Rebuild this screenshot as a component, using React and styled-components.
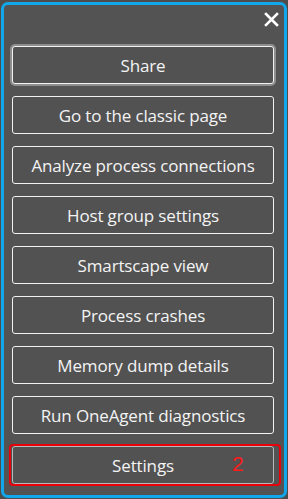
import styled, { createGlobalStyle } from "styled-components";

const Global = createGlobalStyle`
  html, body {
    margin: 0;
    padding: 0;
    background: #4d4d4d;
  }
`;

const Page = styled.div`
  width: 288px;
  height: 499px;
  box-sizing: border-box;
  padding: 2px 1px 1px 1px;
  font-family: "Open Sans", "Noto Sans", sans-serif;
`;

const Panel = styled.div`
  height: 100%;
  box-sizing: border-box;
  border: 3px solid #12a6ea;
  border-radius: 7px;
  background-color: #535353;
  display: flex;
  flex-direction: column;
  padding: 4px 10px 0 8px;
`;

const Header = styled.div`
  display: flex;
  justify-content: flex-end;
  height: 37px;
`;

const Close = styled.button`
  background: none;
  border: none;
  padding: 0;
  margin-right: -7px;
  width: 20px;
  height: 20px;
  display: flex;
  align-items: center;
  justify-content: center;
  cursor: pointer;
`;

const List = styled.div`
  display: flex;
  flex-direction: column;
  gap: 12px;
`;

const Item = styled.div`
  position: relative;
`;

const Button = styled.button`
  width: 100%;
  height: 38px;
  box-sizing: border-box;
  background: #525252;
  border: 1px solid ${(p) => (p.$muted ? "#b8b8b8" : "#f2f2f2")};
  border-radius: 3px;
  color: #f4f4f4;
  font-family: inherit;
  font-size: 17px;
  letter-spacing: -0.15px;
  padding: 0;
  cursor: pointer;
  box-shadow: ${(p) => (p.$focused ? "0 0 0 2px #8e8e8e" : "none")};
`;

const Highlight = styled.div`
  position: absolute;
  left: -3px;
  right: -7px;
  top: -2px;
  bottom: -2px;
  border: 2px solid #e8000b;
  border-radius: 4px;
  pointer-events: none;
`;

const Badge = styled.span`
  position: absolute;
  left: 220px;
  top: 6px;
  color: #ff1a1a;
  font-family: "Liberation Sans", Arial, sans-serif;
  font-size: 21px;
  line-height: 24px;
`;

const items = [
  "Go to the classic page",
  "Analyze process connections",
  "Host group settings",
  "Smartscape view",
  "Process crashes",
  "Memory dump details",
  "Run OneAgent diagnostics",
];

export default function App() {
  return (
    <Page>
      <Global />
      <Panel>
        <Header>
          <Close aria-label="Close">
            <svg width="15" height="15" viewBox="0 0 15 15">
              <path d="M2 2 L13 13 M13 2 L2 13" stroke="#fff" strokeWidth="2.6" strokeLinecap="square" />
            </svg>
          </Close>
        </Header>
        <List>
          <Item>
            <Button $focused>Share</Button>
          </Item>
          {items.map((t) => (
            <Item key={t}>
              <Button>{t}</Button>
            </Item>
          ))}
          <Item>
            <Button $muted>Settings</Button>
            <Highlight />
            <Badge>2</Badge>
          </Item>
        </List>
      </Panel>
    </Page>
  );
}
